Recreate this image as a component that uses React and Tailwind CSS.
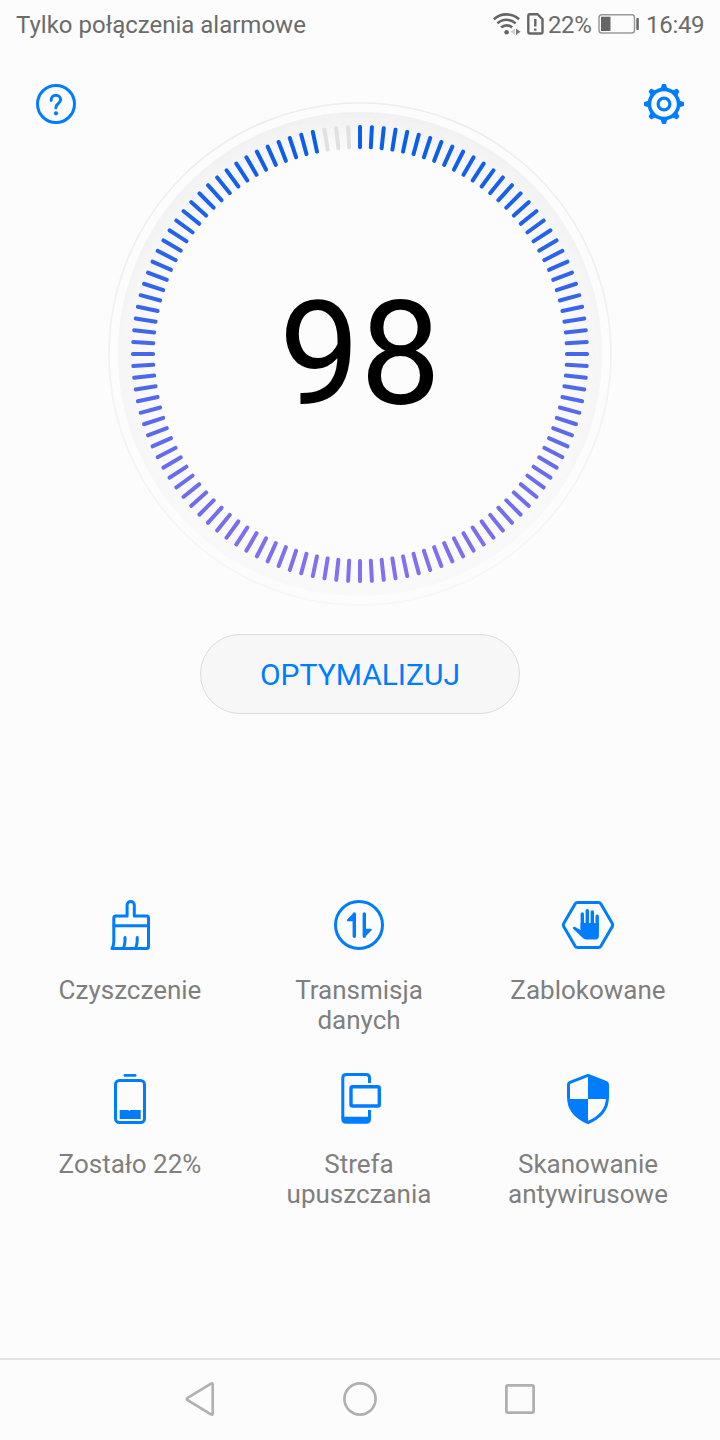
import React from 'react';

const TICKS = 120;
const SCORE = 98;

const StatusBar = () => {
  return (
    <div className="flex h-[50px] items-center pl-4 text-[24px] leading-[50px] text-[#6b6b6b]">
      <span className="flex-1 whitespace-nowrap">Tylko połączenia alarmowe</span>
      <svg className="mr-[6px] h-[50px] w-7 shrink-0" viewBox="0 0 28 50" fill="none" stroke="#666" strokeWidth="2.6">
        <path d="M.9 19.2C8 12.8 19 12.8 26.1 19.2" />
        <path d="M4.4 23.4c5.300-4.800 13-4.800 18.300 0" />
        <path d="M8.100 27.500c3.200-2.900 7.800-2.900 11 0" />
        <circle cx="13.600" cy="32.300" r="2.300" fill="#666" stroke="none" />
        <path d="M22 28.500v6.500l-4.500-3.200z" fill="#d0d0d0" stroke="none" />
        <path d="M23 28.500v6.500l4.500-3.200z" fill="#777" stroke="none" />
      </svg>
      <svg className="mr-[4px] h-[50px] w-[17px] shrink-0" viewBox="0 0 17 50" fill="none" stroke="#666" strokeWidth="2.400">
        <path d="M3 14.200h7.500l5 5v12.600q0 1.700-1.700 1.700H3q-1.700 0-1.700-1.700V15.900q0-1.700 1.700-1.700z" />
        <path d="M8.300 19v7.500M8.300 28.500v2.300" />
      </svg>
      <span className="w-[50px] whitespace-nowrap tracking-[-0.4px]">22%</span>
      <svg className="mr-[7px] h-[50px] w-[41px] shrink-0" viewBox="0 0 41 50">
        <rect x="1" y="14.700" width="35.500" height="18.300" rx="2.800" fill="none" stroke="#999" strokeWidth="1.500" />
        <rect x="3" y="16.700" width="9.500" height="14.300" fill="#666" />
        <rect x="38.300" y="18" width="2.500" height="12" rx="1" fill="#666" />
      </svg>
      <span className="w-[74px] whitespace-nowrap tracking-[-0.3px]">16:49</span>
    </div>
  );
};

const HelpIcon = () => (
  <svg className="mt-[34px] h-10 w-10" viewBox="0 0 40 40" fill="none" stroke="#007dff" strokeWidth="3" strokeLinecap="round">
    <circle cx="20" cy="20" r="18.500" />
    <path d="M15.200 16.300v-.600c0-2.600 2.100-4.500 4.700-4.500s4.700 1.900 4.700 4.500c0 2-1.100 2.900-2.500 4.100-1.400 1.100-2.200 2-2.200 4" />
    <circle cx="20" cy="29.300" r="2.100" fill="#007dff" stroke="none" />
  </svg>
);

const GearIcon = () => (
  <svg className="mt-[34px] h-10 w-10" viewBox="0 0 40 40">
    {[0, 45, 90, 135, 180, 225, 270, 315].map((angle) => (
      <path
        key={angle}
        d="M17.700 1Q17.900 0 18.800 0h2.400q.900 0 1.100 1l.700 2.600q.400 1.400 2.400 2.400H14.600q2-1 2.400-2.400z"
        fill="#007dff"
        transform={`rotate(${angle} 20 20)`}
      />
    ))}
    <circle cx="20" cy="20" r="14.600" fill="none" stroke="#007dff" strokeWidth="3.600" />
    <circle cx="20" cy="20" r="5.900" fill="none" stroke="#007dff" strokeWidth="3.200" />
  </svg>
);

// top of the dial is blue, bottom is violet
const tickColor = (angle) => {
  const t = (1 - Math.cos((angle * Math.PI) / 180)) / 2;
  const from = [10, 94, 232];
  const to = [132, 112, 238];
  const [r, g, b] = from.map((c, i) => Math.round(c + (to[i] - c) * t));
  return `rgb(${r},${g},${b})`;
};

const ScoreDial = () => {
  const ticks = Array.from({ length: TICKS }, (_, i) => i);
  return (
    <div className="mt-[52px] grid h-[504px] w-[504px] place-items-center">
      <svg className="col-start-1 row-start-1 h-[504px] w-[504px]" viewBox="0 0 504 504">
        <defs>
          <radialGradient id="rim" gradientUnits="userSpaceOnUse" cx="252" cy="252" r="242">
            <stop offset="0.84" stopColor="#f0f0f0" stopOpacity="0" />
            <stop offset="1" stopColor="#f0f0f0" />
          </radialGradient>
          <linearGradient id="fade" x1="0" y1="0" x2="0" y2="1">
            <stop offset="0" stopColor="#fff" />
            <stop offset="1" stopColor="#333" />
          </linearGradient>
          <linearGradient id="ring" x1="0" y1="0" x2="0" y2="1">
            <stop offset="0" stopColor="#ededed" />
            <stop offset="1" stopColor="#f7f7f7" />
          </linearGradient>
          <mask id="rimMask">
            <rect width="504" height="504" fill="url(#fade)" />
          </mask>
        </defs>
        <circle cx="252" cy="252" r="251" fill="none" stroke="url(#ring)" strokeWidth="1.700" />
        <circle cx="252" cy="252" r="242" fill="url(#rim)" mask="url(#rimMask)" />
        {ticks.map((i) => (
          <rect
            key={i}
            x="250"
            y="23"
            width="4"
            height="24"
            rx="1.700"
            fill={i >= 117 ? '#e1e1e1' : tickColor(i * 3)}
            transform={`rotate(${i * 3} 252 252)`}
          />
        ))}
      </svg>
      <div className="col-start-1 row-start-1 pt-0.5 text-[144px] leading-[144px] text-black">{SCORE}</div>
    </div>
  );
};

const BrushIcon = () => (
  <g fill="none" stroke="#007dff" strokeWidth="3" strokeLinejoin="round" strokeLinecap="round">
    <path d="M12 53.500q1.800-3 1.800-7V23q0-2 2-2h11.300V10.100a3.600 3.600 0 0 1 7.200 0V21h12.200q2 0 2 2v28.500q0 2-2 2z" />
    <path d="M14 30.800h34.500" />
    <path d="M25 42.500q.2 7-1.700 11M37.200 42.500q.2 7-1.700 11" />
  </g>
);

const TransferIcon = () => (
  <g fill="#007dff" stroke="#007dff" strokeLinecap="round" strokeLinejoin="round">
    <circle cx="30" cy="30" r="23.500" fill="none" strokeWidth="3" />
    <path d="M25.300 19v22.300M35.300 19v22.300" fill="none" strokeWidth="3.400" />
    <path d="M18.800 25.200l6-6v6zM41.700 34.800l-6 6v-6z" strokeWidth="2" />
  </g>
);

const BlockedIcon = () => (
  <g fill="#007dff" stroke="#007dff" strokeLinecap="round" strokeLinejoin="round">
    <path
      d="M19.500 7.500h21q1.500 0 2.300 1.300l11.500 19.600q.900 1.600 0 3.200L42.800 51.200q-.8 1.300-2.300 1.300h-21q-1.500 0-2.300-1.300L5.700 31.600q-.9-1.600 0-3.200L17.200 8.800q.8-1.300 2.300-1.300z"
      fill="none"
      strokeWidth="3"
    />
    <path d="M24.300 19v14M29.300 15.600v16M34.300 17v16M39.200 21.200v12" strokeWidth="3.400" />
    <path
      d="M22.600 28h18.300v13q0 3.400-3.400 3.400h-9.200q-2.400 0-4-1.900l-9.400-8.900q-.7-1.100.5-1.600 1-.4 2.200.2l5 2.800z"
      stroke="none"
    />
  </g>
);

const BatteryIcon = () => (
  <g fill="#007dff">
    <rect x="23.500" y="5" width="13" height="2.800" rx="1.400" />
    <rect x="15.500" y="11.500" width="29" height="42" rx="4" fill="none" stroke="#007dff" strokeWidth="3" />
    <path d="M19.700 41h8.700l1 1 1-1h10.300v9h-21z" />
  </g>
);

const DropZoneIcon = () => (
  <g fill="none" stroke="#007dff" strokeWidth="3">
    <path d="M40.500 14V9q0-3.500-3.500-3.500H17.300q-3.500 0-3.500 3.500v40" />
    <path d="M12.300 47.700h26.700V41h3v9q0 4.700-4.700 4.700H17q-4.700 0-4.700-4.700z" fill="#007dff" stroke="none" />
    <rect x="22" y="17.700" width="28.300" height="19.300" rx="1.500" strokeWidth="3.400" />
  </g>
);

const ShieldIcon = () => (
  <g>
    <path
      d="M30 6.400l18 7q1.500.6 1.500 2.100V28c0 12-7.500 20.500-19.500 25.500C18 48.500 10.500 40 10.500 28V15.500q0-1.500 1.500-2.100z"
      fill="none"
      stroke="#007dff"
      strokeWidth="3"
      strokeLinejoin="round"
    />
    <path d="M30 6l19 8v16H30zM30 30v23C18 48 11 40 10.500 30z" fill="#007dff" />
  </g>
);

const tools = [
  { label: ['Czyszczenie'], icon: BrushIcon },
  { label: ['Transmisja', 'danych'], icon: TransferIcon },
  { label: ['Zablokowane'], icon: BlockedIcon },
  { label: ['Zostało 22%'], icon: BatteryIcon },
  { label: ['Strefa', 'upuszczania'], icon: DropZoneIcon },
  { label: ['Skanowanie', 'antywirusowe'], icon: ShieldIcon },
];

const ToolGrid = () => {
  return (
    <div className="mt-[181px] ml-[15.5px] grid w-[687px] grid-cols-3 auto-rows-[174px]">
      {tools.map(({ label, icon: Icon }) => (
        <div key={label[0]} className="flex flex-col items-center">
          <svg className="h-[60px] w-[60px]" viewBox="0 0 60 60">
            <Icon />
          </svg>
          <div className="mt-5 text-center text-[26px] leading-[30px] whitespace-nowrap text-[#7f7f7f]">
            {label.map((line) => (
              <p key={line}>{line}</p>
            ))}
          </div>
        </div>
      ))}
    </div>
  );
};

const NavBar = () => {
  return (
    <div className="mt-auto flex h-[82px] justify-center gap-[120px] border-t-2 border-[#e1e1e1] pt-[19px]">
      <svg className="h-10 w-10" viewBox="0 0 40 40" fill="none" stroke="#b0b0b0" strokeWidth="2.600" strokeLinejoin="round">
        <path d="M7.600 18.900L31 4.600q1.700-.9 1.700.9v29q0 1.800-1.700.900L7.600 21.100q-1.600-1.100 0-2.200z" />
      </svg>
      <svg className="h-10 w-10" viewBox="0 0 40 40" fill="none" stroke="#b0b0b0" strokeWidth="2.600">
        <circle cx="20" cy="20" r="15.600" />
      </svg>
      <svg className="h-10 w-10" viewBox="0 0 40 40" fill="none" stroke="#b0b0b0" strokeWidth="2.800">
        <rect x="6.400" y="6.400" width="27.200" height="27.200" rx="1.500" />
      </svg>
    </div>
  );
};

const App = () => {
  return (
    <div className="flex h-[1440px] w-[720px] flex-col overflow-hidden bg-[#fcfcfc] font-['Roboto',sans-serif]">
      <StatusBar />

      {/* Score */}
      <div className="flex items-start justify-between px-9">
        <HelpIcon />
        <ScoreDial />
        <GearIcon />
      </div>
      <button className="mt-7 h-20 w-80 self-center rounded-full border border-[#dcdcdc] bg-[#f7f7f7] text-[30px] text-[#007dff]">
        OPTYMALIZUJ
      </button>

      <ToolGrid />
      <NavBar />
    </div>
  );
};

export default App;
